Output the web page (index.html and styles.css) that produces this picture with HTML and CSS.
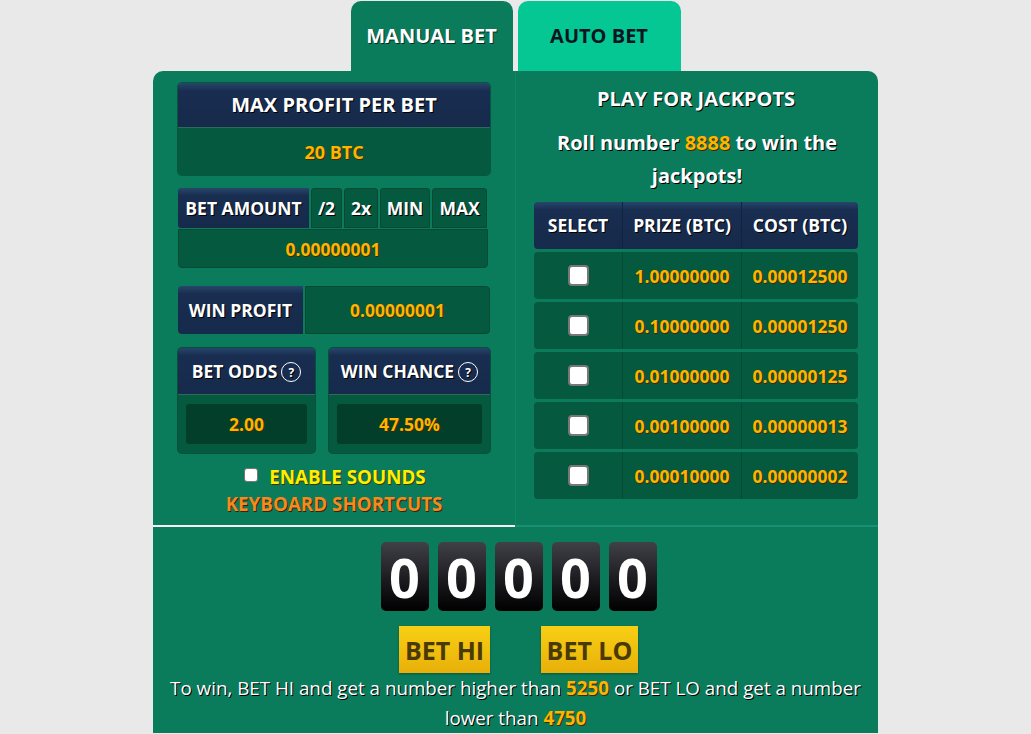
FILE: index.html
```html
<!DOCTYPE html>
<html lang="en">
<head>
    <meta charset="UTF-8">
    <title>Dice - Manual Bet</title>
    <link rel="stylesheet" href="styles.css">
</head>
<body>
    <div class="game">
        <div class="tabs">
            <div class="tab active">MANUAL BET</div>
            <div class="tab auto">AUTO BET</div>
        </div>

        <div class="panel">
            <div class="top">
                <div class="left">
                    <div class="box">
                        <div class="box-head big">MAX PROFIT PER BET</div>
                        <div class="box-value">20 BTC</div>
                    </div>

                    <div class="bet-amount">
                        <div class="amount-row">
                            <div class="navy-cell amount-label">BET AMOUNT</div>
                            <div class="btn-cell half">/2</div>
                            <div class="btn-cell dbl">2x</div>
                            <div class="btn-cell min">MIN</div>
                            <div class="btn-cell max">MAX</div>
                        </div>
                        <div class="amount-value">0.00000001</div>
                    </div>

                    <div class="win-profit">
                        <div class="navy-cell profit-label">WIN PROFIT</div>
                        <div class="profit-value">0.00000001</div>
                    </div>

                    <div class="odds">
                        <div class="odd-box">
                            <div class="odd-head">BET ODDS <span class="help">?</span></div>
                            <div class="odd-body"><div class="odd-input">2.00</div></div>
                        </div>
                        <div class="odd-box wide">
                            <div class="odd-head">WIN CHANCE <span class="help">?</span></div>
                            <div class="odd-body"><div class="odd-input">47.50%</div></div>
                        </div>
                    </div>

                    <div class="sounds">
                        <span class="check small"></span>
                        <span>ENABLE SOUNDS</span>
                    </div>
                    <div class="shortcuts">KEYBOARD SHORTCUTS</div>
                </div>

                <div class="right">
                    <div class="jp-title">PLAY FOR JACKPOTS</div>
                    <div class="jp-text">Roll number <span class="gold">8888</span> to win the jackpots!</div>

                    <div class="jp-table">
                        <div class="jp-head">
                            <div>SELECT</div>
                            <div>PRIZE (BTC)</div>
                            <div>COST (BTC)</div>
                        </div>
                        <div class="jp-row"><div><span class="check"></span></div><div>1.00000000</div><div>0.00012500</div></div>
                        <div class="jp-row"><div><span class="check"></span></div><div>0.10000000</div><div>0.00001250</div></div>
                        <div class="jp-row"><div><span class="check"></span></div><div>0.01000000</div><div>0.00000125</div></div>
                        <div class="jp-row"><div><span class="check"></span></div><div>0.00100000</div><div>0.00000013</div></div>
                        <div class="jp-row"><div><span class="check"></span></div><div>0.00010000</div><div>0.00000002</div></div>
                    </div>
                </div>
            </div>

            <div class="bottom">
                <div class="digits">
                    <span class="digit">0</span>
                    <span class="digit">0</span>
                    <span class="digit">0</span>
                    <span class="digit">0</span>
                    <span class="digit">0</span>
                </div>
                <div class="bet-buttons">
                    <button class="bet-btn hi">BET HI</button>
                    <button class="bet-btn lo">BET LO</button>
                </div>
                <p class="rule">To win, BET HI and get a number higher than <b>5250</b> or BET LO and get a number lower than <b>4750</b></p>
            </div>
        </div>
    </div>
</body>
</html>
```

FILE: styles.css
```css
body {
    margin: 0;
    padding-top: 1px;
    background: #e9e9e9;
    font-family: "Open Sans", Arial, sans-serif;
    color: #fff;
    overflow: hidden;
}
.game {
    width: 725px;
    margin: 0 auto;
}

/* tabs */
.tabs {
    display: flex;
    justify-content: center;
    gap: 5px;
}
.tab {
    width: 162px;
    height: 70px;
    border-radius: 10px 10px 0 0;
    display: flex;
    align-items: center;
    justify-content: center;
    padding-bottom: 1px;
    font-weight: 700;
    font-size: 20px;
    box-sizing: border-box;
}
.tab.active {
    background: #0a7b5b;
    text-shadow: 1px 1px 0 #04301f;
}
.tab.auto {
    width: 163px;
    background: #04c794;
    color: #0b1420;
}

.panel {
    background: #0a7b5b;
    border-radius: 10px 10px 0 0;
}
.top {
    display: flex;
}
.left {
    width: 362px;
    padding: 12px 25px 8px 25px;
    box-sizing: border-box;
    border-bottom: 2px solid #f4f4f4;
}
.right {
    width: 363px;
    padding: 14px 20px 23px 18px;
    box-sizing: border-box;
    border-left: 1px solid #11875f;
    border-bottom: 2px solid #179073;
}

/* shared */
.box {
    border-radius: 4px;
    overflow: hidden;
    box-shadow: 0 0 0 1px #07563f;
}
.box-head, .navy-cell, .odd-head, .jp-head {
    background: linear-gradient(#27466a 0, #182d50 8px, #162b4b 100%);
    font-weight: 700;
    text-shadow: 1px 1px 0 #000;
}
.box-head {
    height: 45px;
    display: flex;
    align-items: center;
    justify-content: center;
    padding-bottom: 2px;
    box-sizing: border-box;
    font-size: 20px;
    border-bottom: 1px solid #2e6b5a;
}
.box-value {
    height: 47px;
    background: #05593f;
    display: flex;
    align-items: center;
    justify-content: center;
    color: #ffb400;
    font-weight: 700;
    font-size: 18px;
    text-shadow: 1px 1px 0 #3a2a00;
}

/* bet amount */
.bet-amount {
    margin-top: 13px;
}
.amount-row {
    display: flex;
    gap: 2px;
    height: 40px;
}
.navy-cell {
    display: flex;
    align-items: center;
    justify-content: center;
    border-radius: 3px 0 0 3px;
    font-size: 17.5px;
}
.amount-label {
    width: 131px;
}
.btn-cell {
    background: #05593f;
    border: 1px solid #064a34;
    border-radius: 3px 3px 0 0;
    display: flex;
    align-items: center;
    justify-content: center;
    font-weight: 700;
    font-size: 17.5px;
    text-shadow: 1px 1px 0 #000;
    box-sizing: border-box;
}
.half { width: 31px; }
.dbl { width: 34px; }
.min { width: 50px; }
.max { width: 55px; }
.amount-value {
    height: 39px;
    width: 310px;
    margin-top: 1px;
    background: #05593f;
    border: 1px solid #064a34;
    border-radius: 0 0 4px 4px;
    box-sizing: border-box;
    display: flex;
    align-items: center;
    justify-content: center;
    color: #ffb400;
    font-weight: 700;
    font-size: 17.5px;
    text-shadow: 1px 1px 0 #3a2a00;
}

/* win profit */
.win-profit {
    margin-top: 18px;
    display: flex;
    gap: 2px;
    height: 48px;
}
.profit-label {
    width: 125px;
    border-radius: 4px 0 0 4px;
}
.profit-value {
    flex: 1;
    background: #05593f;
    border: 1px solid #064a34;
    border-radius: 0 4px 4px 0;
    display: flex;
    align-items: center;
    justify-content: center;
    color: #ffb400;
    font-weight: 700;
    font-size: 17.5px;
    text-shadow: 1px 1px 0 #3a2a00;
}

/* odds */
.odds {
    margin-top: 14px;
    display: flex;
    justify-content: space-between;
}
.odd-box {
    width: 137px;
    border-radius: 4px;
    overflow: hidden;
    background: #05593f;
    box-shadow: 0 0 0 1px #06513a;
}
.odd-box.wide {
    width: 161px;
}
.odd-head {
    height: 47px;
    display: flex;
    align-items: center;
    justify-content: center;
    gap: 4px;
    padding-bottom: 1px;
    box-sizing: border-box;
    font-size: 17.5px;
    border-bottom: 1px solid #2e6b5a;
}
.help {
    width: 18px;
    height: 18px;
    border: 1.5px solid #fff;
    border-radius: 50%;
    font-size: 12px;
    display: flex;
    align-items: center;
    justify-content: center;
    margin-top: 3px;
}
.odd-body {
    padding: 9px 8px 9px 8px;
}
.odd-input {
    height: 40px;
    background: #033e2a;
    border-radius: 3px;
    display: flex;
    align-items: center;
    justify-content: center;
    color: #ffb400;
    font-weight: 700;
    font-size: 17.5px;
    text-shadow: 1px 1px 0 #3a2a00;
}

/* sounds */
.sounds {
    margin-top: 11px;
    display: flex;
    justify-content: center;
    align-items: center;
    gap: 11px;
    color: #ffee00;
    font-weight: 700;
    font-size: 18.8px;
    text-shadow: 1px 1px 0 #3a3500;
    padding-left: 2px;
    line-height: 27px;
}
.check {
    display: inline-block;
    width: 21px;
    height: 21px;
    background: #fff;
    border: 2px solid #777;
    border-radius: 4px;
    box-sizing: border-box;
    vertical-align: middle;
}
.check.small {
    width: 14px;
    height: 14px;
    border-width: 1px;
    border-radius: 3px;
    margin-top: -6px;
}
.shortcuts {
    text-align: center;
    color: #f58a1e;
    font-weight: 700;
    font-size: 18.8px;
    line-height: 26px;
    text-shadow: 1px 1px 0 #3a2000;
}

/* jackpots */
.jp-title {
    text-align: center;
    font-weight: 700;
    font-size: 20px;
    line-height: 28px;
    text-shadow: 1px 1px 0 #000;
}
.jp-text {
    margin: 13px 10px 0 12px;
    text-align: center;
    font-weight: 700;
    font-size: 20px;
    line-height: 33px;
    text-shadow: 1px 1px 0 #000;
}
.gold {
    color: #ffb400;
    text-shadow: 1px 1px 0 #3a2a00;
}
.jp-table {
    margin-top: 10px;
}
.jp-head, .jp-row {
    display: grid;
    grid-template-columns: 88px 119px 1fr;
    border-radius: 4px;
    overflow: hidden;
}
.jp-head {
    height: 47px;
    font-size: 17.5px;
    padding-bottom: 2px;
    box-sizing: border-box;
}
.jp-head div, .jp-row div {
    display: flex;
    align-items: center;
    justify-content: center;
}
.jp-head div + div {
    border-left: 1px solid #0e2540;
}
.jp-row {
    margin-top: 3px;
    height: 47px;
    background: #05593f;
    color: #ffb400;
    font-weight: 700;
    font-size: 17.5px;
    text-shadow: 1px 1px 0 #3a2a00;
}
.jp-row div + div {
    border-left: 1px solid #044b34;
}

/* bottom */
.bottom {
    padding-top: 15px;
    text-align: center;
}
.digits {
    display: flex;
    justify-content: center;
    gap: 9px;
    padding-left: 6px;
}
.digit {
    width: 48px;
    height: 69px;
    border-radius: 5px;
    background: linear-gradient(#404048, #1b1b1f 55%, #000);
    display: flex;
    align-items: center;
    justify-content: center;
    font-weight: 700;
    font-size: 54px;
    color: #fff;
}
.bet-buttons {
    margin-top: 15px;
    display: flex;
    justify-content: center;
    gap: 51px;
    padding-left: 6px;
}
.bet-btn {
    height: 47px;
    border: none;
    background: linear-gradient(#f8cf14, #e8b00a);
    box-shadow: 0 1px 2px rgba(0, 0, 0, 0.3);
    font-family: "Open Sans", Arial, sans-serif;
    font-weight: 700;
    font-size: 25px;
    color: #4a3a02;
    padding: 0;
}
.bet-btn.hi { width: 91px; }
.bet-btn.lo { width: 97px; }
.rule {
    margin: 0;
    padding: 0 12px;
    font-size: 18.8px;
    line-height: 30px;
    text-shadow: 1px 1px 0 #000;
}
.rule b {
    color: #ffb400;
    text-shadow: 1px 1px 0 #3a2a00;
}
```
